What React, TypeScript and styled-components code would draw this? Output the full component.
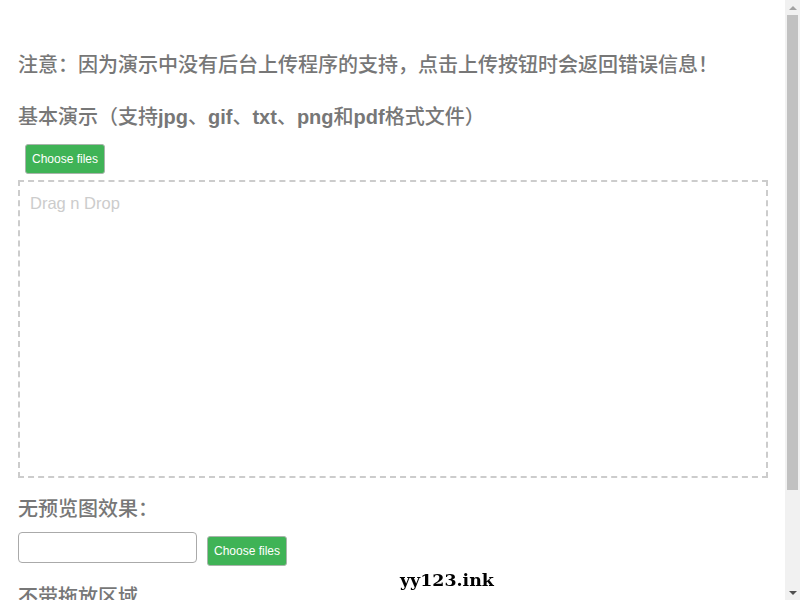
import React from 'react';
import styled, { createGlobalStyle } from 'styled-components';

const GlobalStyle = createGlobalStyle`
  body {
    margin: 8px 23px 8px 8px;
    background: #fff;
    font-family: "Liberation Sans", "Noto Sans CJK SC", sans-serif;
  }
`;

const Page = styled.div`
  display: flex;
  flex-direction: column;
  align-items: stretch;
  padding: 26px 9px 60px 10px;
`;

const Heading = styled.h3`
  margin: 20px 0 10px;
  font-size: 20px;
  line-height: 22px;
  font-weight: 500;
  color: #777;
  font-family: "Liberation Sans", "Noto Sans CJK SC", sans-serif;
`;

const Latin = styled.span`
  font-weight: 700;
`;

const Toolbar = styled.div`
  display: flex;
  padding: 6px 7px;
`;

const GreenButton = styled.button<{ offset?: number }>`
  height: 30px;
  padding: 0 6px;
  margin-top: ${p => p.offset ?? 0}px;
  background: #3fb356;
  color: #fff;
  border: 1px solid #a9b4ab;
  border-radius: 3px;
  font-family: "Liberation Sans", sans-serif;
  font-size: 12px;
  cursor: pointer;
`;

const DropZone = styled.div`
  height: 274px;
  padding: 12px 10px 8px;
  border: 2px dashed #ccc;
  color: #ccc;
  font-size: 16.5px;
  line-height: 18px;
`;

const FileRow = styled.div`
  display: flex;
  align-items: flex-start;
  gap: 10px;
  margin-top: 2px;
`;

const FileField = styled.div`
  width: 177px;
  height: 29px;
  border: 1px solid #aaa;
  border-radius: 4px;
  background: #fff;
`;

const Watermark = styled.div`
  position: fixed;
  left: 400px;
  bottom: 10px;
  font-family: "DejaVu Serif", "Liberation Serif", serif;
  font-weight: 700;
  font-size: 17.4px;
  color: #000;
`;

const Scrollbar = styled.div`
  position: fixed;
  top: 0;
  right: 0;
  width: 15px;
  height: 100vh;
  background: #f1f1f1;
  display: flex;
  flex-direction: column;
  align-items: center;
`;

const Arrow = styled.div<{ down?: boolean }>`
  height: 15px;
  display: flex;
  align-items: center;
  justify-content: center;
  &::after {
    content: '';
    border-left: 4px solid transparent;
    border-right: 4px solid transparent;
    ${p => p.down
      ? 'border-top: 4px solid #505050;'
      : 'border-bottom: 4px solid #a3a3a3;'}
  }
`;

const Track = styled.div`
  flex: 1;
  width: 100%;
  display: flex;
  justify-content: center;
`;

const Thumb = styled.div`
  width: 11px;
  height: 475px;
  background: #c1c1c1;
`;

export default function App() {
  return (
    <>
      <GlobalStyle />
      <Page>
        <Heading>注意：因为演示中没有后台上传程序的支持，点击上传按钮时会返回错误信息！</Heading>
        <Heading>
          基本演示（支持<Latin>jpg</Latin>、<Latin>gif</Latin>、<Latin>txt</Latin>、<Latin>png</Latin>和<Latin>pdf</Latin>格式文件）
        </Heading>
        <Toolbar>
          <GreenButton>Choose files</GreenButton>
        </Toolbar>
        <DropZone>Drag n Drop</DropZone>
        <Heading>无预览图效果：</Heading>
        <FileRow>
          <FileField />
          <GreenButton offset={4}>Choose files</GreenButton>
        </FileRow>
        <Heading>不带拖放区域</Heading>
        <FileRow>
          <GreenButton>Choose files</GreenButton>
        </FileRow>
      </Page>
      <Watermark>yy123.ink</Watermark>
      <Scrollbar>
        <Arrow />
        <Track>
          <Thumb />
        </Track>
        <Arrow down />
      </Scrollbar>
    </>
  );
}
